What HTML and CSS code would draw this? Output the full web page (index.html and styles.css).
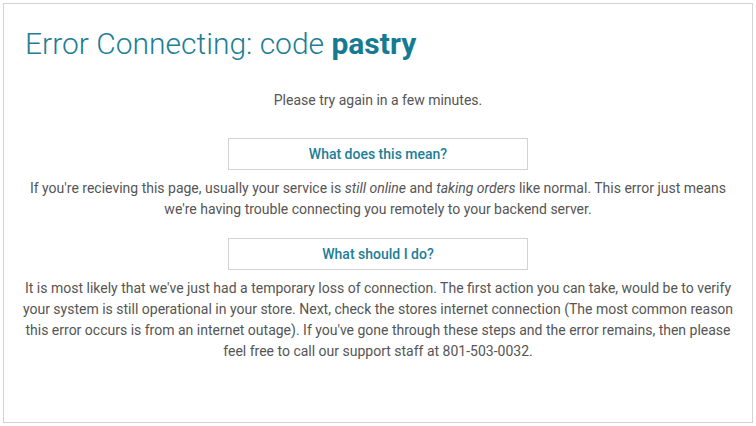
FILE: index.html
```html
<!DOCTYPE html>
<html lang="en">
<head>
<meta charset="utf-8">
<title>Error Connecting</title>
<link rel="stylesheet" href="styles.css">
</head>
<body>
<main class="card">
  <h1 class="title">Error Connecting: code <strong>pastry</strong></h1>
  <p class="lead">Please try again in a few minutes.</p>
  <div class="section">
    <div class="label">What does this mean?</div>
    <p class="text">If you're recieving this page, usually your service is <em>still online</em> and <em>taking orders</em> like normal. This error just means we're having trouble connecting you remotely to your backend server.</p>
  </div>
  <div class="section">
    <div class="label">What should I do?</div>
    <p class="text">It is most likely that we've just had a temporary loss of connection. The first action you can take, would be to verify your system is still operational in your store. Next, check the stores internet connection (The most common reason this error occurs is from an internet outage). If you've gone through these steps and the error remains, then please feel free to call our support staff at 801-503-0032.</p>
  </div>
</main>
</body>
</html>
```

FILE: styles.css
```css
html, body {
  margin: 0;
  padding: 0;
  background: #ffffff;
}
body {
  padding: 3px;
  font-family: Roboto, "Liberation Sans", sans-serif;
  color: #555555;
}
.card {
  box-sizing: border-box;
  width: 750px;
  height: 420px;
  border: 1px solid #d3d3d3;
  padding: 20px 15px;
}
.title {
  margin: 0 0 0 6px;
  font-size: 30px;
  font-weight: 300;
  line-height: 40px;
  color: #1d7e96;
}
.title strong {
  font-weight: 700;
  color: #167a93;
}
.lead {
  margin: 26px 0 0;
  text-align: center;
  font-size: 14px;
  line-height: 21px;
}
.section {
  display: flex;
  flex-direction: column;
  align-items: center;
}
.section + .section {
  margin-top: 18px;
}
.lead + .section {
  margin-top: 27px;
}
.label {
  box-sizing: border-box;
  width: 300px;
  height: 32px;
  border: 1px solid #d3d3d3;
  display: flex;
  align-items: center;
  justify-content: center;
  font-size: 14px;
  font-weight: 500;
  color: #1d7e96;
}
.text {
  margin: 8px 0 0;
  text-align: center;
  font-size: 14px;
  line-height: 21px;
}
.text em {
  font-style: italic;
}
```
